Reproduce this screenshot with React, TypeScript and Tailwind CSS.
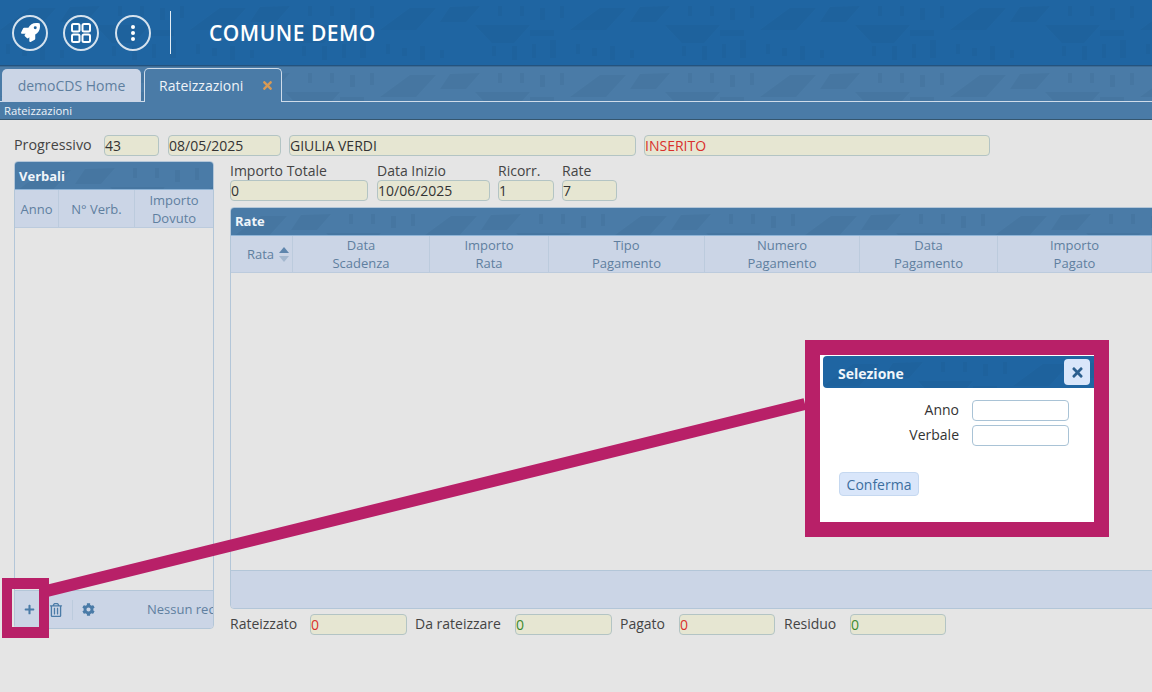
import React from "react";
import { FaRocket, FaRegTrashAlt, FaCog, FaTimes, FaPlus } from "react-icons/fa";

function Field({ w, value, color = "text-[#333]" }: { w: string; value?: string; color?: string }) {
  return (
    <div className={`${w} h-[21px] shrink-0 rounded-[4px] border border-[#b3c4c4] bg-[#e6e6d2] text-[14px] leading-[19px] ${color}`}>
      {value}
    </div>
  );
}

function Th({ w, a, b, children }: { w: string; a: string; b?: string; children?: React.ReactNode }) {
  return (
    <div className={`${w} shrink-0 flex items-center justify-center border-r border-[#bccbdd] text-center text-[13px] leading-[18px] text-[#5f7f9f]`}>
      <div>
        {a}
        {b && <br />}
        {b}
      </div>
      {children}
    </div>
  );
}

function Tex() {
  return (
    <svg className="absolute inset-0 h-full w-full" preserveAspectRatio="none" aria-hidden="true">
      <defs>
        <pattern id="tex" width="190" height="66" patternUnits="userSpaceOnUse">
          <path
            d="M0 30L30 8h26L36 30zM95 25h55l-16 18h-22zM70 7l30-1-14 16H60zM150 30h24v6h-24zM6 44h4v10H6zM22 48h5v8h-5zM40 46h5v14h-5zM60 50h4v8h-4zM112 46h4v10h-4zM132 46h5v14h-5zM152 44h4v14h-4zM170 40h6v18h-6zM118 6h4v10h-4zM140 6h4v10h-4zM160 8h5v12h-5zM180 6h4v12h-4z"
            fill="#14365a"
            fillOpacity="0.07"
          />
        </pattern>
      </defs>
      <rect width="100%" height="100%" fill="url(#tex)" />
    </svg>
  );
}

export default function App() {
  return (
    <div className="relative h-[692px] w-[1152px] overflow-hidden bg-[#e5e5e5] font-['Open_Sans',sans-serif] text-[#444]">
      <header className="relative flex h-[66px] items-center border-b border-[#23537f] bg-[#1f65a2] pl-[12px] text-white">
        <Tex />
        <div className="relative flex h-9 w-9 items-center justify-center rounded-full border-2 border-[#d5e2ee]">
          <FaRocket className="shrink-0 text-[19px]" />
        </div>
        <div className="relative ml-[15px] flex h-9 w-9 items-center justify-center rounded-full border-2 border-[#d5e2ee]">
          <svg width="22" height="22" viewBox="0 0 22 22" fill="none" stroke="currentColor" strokeWidth="2">
            <rect x="2" y="2" width="7.5" height="7.5" rx="1.5" />
            <rect x="12.5" y="2" width="7.5" height="7.5" rx="1.5" />
            <rect x="2" y="12.5" width="7.5" height="7.5" rx="1.5" />
            <rect x="12.5" y="12.5" width="7.5" height="7.5" rx="1.500" />
          </svg>
        </div>
        <div className="relative ml-[16px] flex h-9 w-9 items-center justify-center rounded-full border-2 border-[#d5e2ee]">
          <svg width="6" height="16" viewBox="0 0 6 16" fill="currentColor">
            <circle cx="3" cy="2" r="2" />
            <circle cx="3" cy="8" r="2" />
            <circle cx="3" cy="14" r="2" />
          </svg>
        </div>
        <div className="relative ml-[19px] h-[43px] w-px bg-[#e3edf5]" />
        <div className="relative ml-[38px] mt-[3px] text-[21px] font-semibold tracking-[0.5px]">COMUNE DEMO</div>
      </header>

      <div className="relative h-[36px] border-t border-[#3f6c94] bg-[#4a7ba7]">
        <Tex />
        <div className="absolute bottom-0 left-0 right-0 h-px bg-[#cfdcea]" />
        <div className="relative flex h-full items-end pl-[2px]">
          <div className="flex h-[33px] w-[139px] items-center justify-center rounded-t-[5px] bg-[#cbd5e6] text-[14px] text-[#5f7f9f]">demoCDS Home</div>
          <div className="relative ml-[3px] flex h-[34px] w-[138px] items-center rounded-t-[5px] border border-b-0 border-[#cfdcea] bg-[#4a7ba7] pl-[14px] text-[14px] text-[#eef3f8]">
            Rateizzazioni
            <FaTimes className="absolute right-[7px] top-[10px] shrink-0 text-[13px] text-[#d89a55]" />
          </div>
        </div>
      </div>

      <div className="h-[18px] border-b border-[#35566f] bg-[#4a7ba7] pl-[4px] text-[11.3px] leading-[18px] text-[#eef3f8]">Rateizzazioni</div>

      <main className="px-[14px] pt-[15px]">
        <div className="flex items-center">
          <div className="w-[90px] pb-[2px] text-[14.3px] leading-[19px]">Progressivo</div>
          <Field w="w-[55px]" value="43" />
          <div className="w-[9px]" />
          <Field w="w-[113px]" value="08/05/2025" />
          <div className="w-[8px]" />
          <Field w="w-[347px]" value="GIULIA VERDI" />
          <div className="w-[8px]" />
          <Field w="w-[346px]" value="INSERITO" color="text-[#d9302c]" />
        </div>

        <div className="mt-[5px] flex">
          <section className="flex h-[468px] w-[200px] shrink-0 flex-col overflow-hidden rounded-[4px] border border-[#b3c6d8]">
            <div className="relative h-[28px] shrink-0 border-b border-[#8fb4d6] bg-[#4a7ba7] pl-[4px] text-[13px] font-bold leading-[28px] text-[#f0f5fa]">
              <Tex />
              <span className="relative">Verbali</span>
            </div>
            <div className="flex h-[38px] shrink-0 border-b border-[#bccbdd] bg-[#cbd5e6]">
              <Th w="w-[44px]" a="Anno" />
              <Th w="w-[76px]" a="N° Verb." />
              <Th w="w-[78px] border-r-0" a="Importo" b="Dovuto" />
            </div>
            <div className="flex-1" />
            <div className="relative flex h-[38px] shrink-0 items-center whitespace-nowrap border-t border-[#b3c6d8] bg-[#cbd5e6] text-[#4a7ba7]">
              <FaPlus className="ml-[9px] shrink-0 text-[11px]" />
              <FaRegTrashAlt className="ml-[14px] shrink-0 text-[14px]" />
              <div className="ml-[9px] h-[20px] w-px shrink-0 bg-[#bccbdd]" />
              <FaCog className="ml-[9px] shrink-0 text-[13px]" />
              <div className="ml-[52px] shrink-0 text-[13px] text-[#5f7f9f]">Nessun record</div>
            </div>
          </section>

          <div className="ml-[16px] flex w-[940px] shrink-0 flex-col">
            <div className="flex">
              <div className="w-[138px]">
                <div className="text-[14px] leading-[19px]">Importo Totale</div>
                <Field w="w-[138px]" value="0" />
              </div>
              <div className="ml-[9px] w-[113px]">
                <div className="text-[14px] leading-[19px]">Data Inizio</div>
                <Field w="w-[113px]" value="10/06/2025" />
              </div>
              <div className="ml-[8px] w-[56px]">
                <div className="text-[14px] leading-[19px]">Ricorr.</div>
                <Field w="w-[56px]" value="1" />
              </div>
              <div className="ml-[8px] w-[55px]">
                <div className="text-[14px] leading-[19px]">Rate</div>
                <Field w="w-[55px]" value="7" />
              </div>
            </div>

            <section className="mt-[6px] flex h-[402px] flex-col overflow-hidden rounded-[4px] border border-[#b3c6d8]">
              <div className="relative h-[28px] shrink-0 border-b border-[#8fb4d6] bg-[#4a7ba7] pl-[4px] text-[13px] font-bold leading-[26px] text-[#f0f5fa]">
                <Tex />
                <span className="relative">Rate</span>
              </div>
              <div className="flex h-[37px] shrink-0 border-b border-[#bccbdd] bg-[#cbd5e6]">
                <Th w="w-[62px] justify-end pr-[3px]" a="Rata">
                  <svg width="10" height="15" viewBox="0 0 10 15" className="ml-[5px] shrink-0">
                    <path d="M5 0l5 6H0z" fill="#5f86ad" />
                    <path d="M5 15l5-6H0z" fill="#a4b8cf" />
                  </svg>
                </Th>
                <Th w="w-[137px]" a="Data" b="Scadenza" />
                <Th w="w-[119px]" a="Importo" b="Rata" />
                <Th w="w-[156px]" a="Tipo" b="Pagamento" />
                <Th w="w-[155px]" a="Numero" b="Pagamento" />
                <Th w="w-[138px]" a="Data" b="Pagamento" />
                <Th w="w-[154px]" a="Importo" b="Pagato" />
              </div>
              <div className="flex-1" />
              <div className="h-[38px] shrink-0 border-t border-[#b3c6d8] bg-[#cbd5e6]" />
            </section>

            <div className="mt-[5px] flex items-center text-[14px]">
              <div className="w-[80px] pb-[2px] leading-[19px]">Rateizzato</div>
              <Field w="w-[97px]" value="0" color="text-[#d9302c]" />
              <div className="ml-[8px] w-[100px] pb-[2px] leading-[19px]">Da rateizzare</div>
              <Field w="w-[97px]" value="0" color="text-[#3d8a2e]" />
              <div className="ml-[8px] w-[59px] pb-[2px] leading-[19px]">Pagato</div>
              <Field w="w-[96px]" value="0" color="text-[#d9302c]" />
              <div className="ml-[9px] w-[66px] pb-[2px] leading-[19px]">Residuo</div>
              <Field w="w-[96px]" value="0" color="text-[#3d8a2e]" />
            </div>
          </div>
        </div>
      </main>

      {/* Annotation overlay */}
      <svg className="absolute left-0 top-0" width="1152" height="692" aria-hidden="true">
        <path d="M44 591.700L805 404" stroke="#b82068" strokeWidth="12" fill="none" />
      </svg>
      <div className="absolute left-[2px] top-[578px] h-[60px] w-[47px] border-x-[10px] border-y-[11px] border-[#b82068]" />
      <div className="absolute left-[805px] top-[340px] h-[197px] w-[304px] border-[15px] border-[#b82068] bg-white">
        <div className="relative ml-[3px] mt-[1px] flex h-[32px] items-center rounded-l-[4px] bg-[#1f65a2] pl-[15px] pt-[2px] text-[14px] font-bold text-[#f0f5fa]">
          <Tex />
          <span className="relative">Selezione</span>
          <div className="absolute right-[4px] top-[3px] flex h-[26px] w-[26px] items-center justify-center rounded-[4px] bg-[#d9e6fa] text-[#2c5f8e]">
            <FaTimes className="shrink-0 text-[15px]" />
          </div>
        </div>
        <div className="mt-[12px] flex items-center">
          <div className="w-[139px] pb-[2px] text-right text-[14px] leading-[19px] text-[#333]">Anno</div>
          <div className="ml-[13px] h-[21px] w-[97px] rounded-[4px] border border-[#a9c3d6] bg-white" />
        </div>
        <div className="mt-[4px] flex items-center">
          <div className="w-[139px] pb-[2px] text-right text-[14px] leading-[19px] text-[#333]">Verbale</div>
          <div className="ml-[13px] h-[21px] w-[97px] rounded-[4px] border border-[#a9c3d6] bg-white" />
        </div>
        <div className="ml-[19px] mt-[26px] flex h-[24px] w-[80px] items-center justify-center rounded-[4px] border border-[#c5d8f0] bg-[#d9e6fa] text-[14px] text-[#3d6f9f]">Conferma</div>
      </div>
    </div>
  );
}
